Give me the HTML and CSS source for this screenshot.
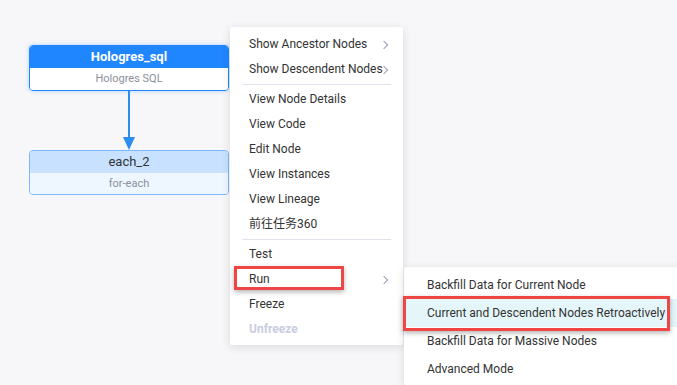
FILE: index.html
```html
<!DOCTYPE html>
<html lang="en">
<head>
    <meta charset="UTF-8">
    <title>DAG context menu</title>
    <link rel="stylesheet" href="styles.css">
</head>
<body>
    <div class="canvas">
        <!-- nodes -->
        <div class="node node-main">
            <div class="node-title">Hologres_sql</div>
            <div class="node-type">Hologres SQL</div>
        </div>
        <svg class="edge" width="14" height="60" viewBox="0 0 14 60">
            <line x1="7" y1="0" x2="7" y2="48" stroke="#2d8cf0" stroke-width="2"/>
            <polygon points="1,46 13,46 7,59" fill="#2d8cf0"/>
        </svg>
        <div class="node node-sub">
            <div class="node-title">each_2</div>
            <div class="node-type">for-each</div>
        </div>

        <!-- context menu -->
        <ul class="menu">
            <li class="has-sub">Show Ancestor Nodes</li>
            <li class="has-sub">Show Descendent Nodes</li>
            <li class="divider"></li>
            <li>View Node Details</li>
            <li>View Code</li>
            <li>Edit Node</li>
            <li>View Instances</li>
            <li>View Lineage</li>
            <li>前往任务360</li>
            <li class="divider"></li>
            <li>Test</li>
            <li class="has-sub">Run</li>
            <li>Freeze</li>
            <li class="disabled">Unfreeze</li>
        </ul>

        <ul class="menu submenu">
            <li>Backfill Data for Current Node</li>
            <li class="hover">Current and Descendent Nodes Retroactively</li>
            <li>Backfill Data for Massive Nodes</li>
            <li>Advanced Mode</li>
        </ul>

        <!-- annotation boxes -->
        <div class="mark mark-run"></div>
        <div class="mark mark-retro"></div>
    </div>
</body>
</html>
```

FILE: styles.css
```css
/* reset css */
html,body,ul,li {
    margin: 0;
    padding: 0;
    list-style: none;
}
body {
    font-family: Roboto, "Noto Sans CJK SC", sans-serif;
    font-size: 12px;
    color: #333;
    background-color: #f7f7f9;
}
/* canvas */
.canvas {
    position: relative;
    width: 677px;
    height: 385px;
    overflow: hidden;
}
.node {
    position: absolute;
    left: 29px;
    box-sizing: border-box;
    width: 200px;
    height: 46px;
    border-radius: 4px;
    overflow: hidden;
    text-align: center;
}
.node-main {
    top: 45px;
    border: 1px solid #1f86ff;
    box-shadow: 0 0 4px rgba(31, 134, 255, 0.35);
}
.node-main .node-title {
    color: #fff;
    font-weight: bold;
    background-color: #1f86ff;
}
.node-main .node-type {
    background-color: #fff;
}
.node-sub {
    top: 150px;
    height: 45px;
    border: 1px solid #7cb8ff;
}
.node-sub .node-title {
    color: #333;
    background-color: #c7e1ff;
}
.node-sub .node-type {
    background-color: #eef6ff;
}
.node-title {
    height: 22px;
    line-height: 22px;
    font-size: 13px;
}
.node-type {
    height: 22px;
    line-height: 22px;
    font-size: 11px;
    color: #8c909c;
}
.edge {
    position: absolute;
    left: 122px;
    top: 91px;
}
/* menu */
.menu {
    position: absolute;
    left: 230px;
    top: 27px;
    box-sizing: border-box;
    width: 173px;
    padding: 5px 0 3px;
    background-color: #fff;
    border-radius: 2px;
    box-shadow: 0 2px 10px rgba(0, 0, 0, 0.12);
}
.menu>li {
    position: relative;
    height: 25px;
    line-height: 25px;
    padding-left: 19px;
    white-space: nowrap;
}
.menu>.has-sub:after {
    content: '';
    position: absolute;
    right: 16px;
    top: 10px;
    width: 5px;
    height: 5px;
    border-top: 1.5px solid #9aa0b6;
    border-right: 1.5px solid #9aa0b6;
    transform: rotate(45deg);
}
.menu>.divider {
    height: 1px;
    margin: 2px 12px;
    padding: 0;
    background-color: #e1e3ec;
}
.menu>.disabled {
    color: #c9cce0;
    font-weight: bold;
}
.submenu {
    left: 404px;
    top: 267px;
    width: 280px;
    padding: 4px 0 2px;
}
.submenu>li {
    height: 28px;
    line-height: 28px;
    padding-left: 23px;
}
.submenu>.hover {
    background-color: #e5f6fa;
}
/* annotations */
.mark {
    position: absolute;
    box-sizing: border-box;
    border: 3px solid #ef4545;
    box-shadow: 0 2px 5px rgba(0, 0, 0, 0.3);
}
.mark-run {
    left: 234px;
    top: 266px;
    width: 110px;
    height: 24px;
}
.mark-retro {
    left: 403px;
    top: 296px;
    width: 267px;
    height: 35px;
}
```
